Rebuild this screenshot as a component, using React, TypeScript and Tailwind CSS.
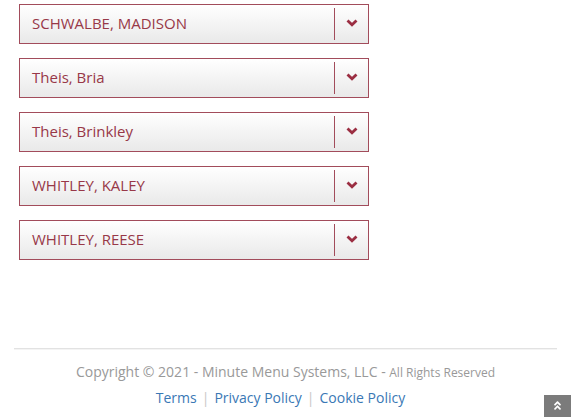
import React from "react";
import { FaAngleDoubleUp } from "react-icons/fa";

const names = [
  "SCHWALBE, MADISON",
  "Theis, Bria",
  "Theis, Brinkley",
  "WHITLEY, KALEY",
  "WHITLEY, REESE",
];

function Chevron() {
  return (
    <svg width="12" height="8" viewBox="0 0 12 8" fill="none">
      <polyline points="1.5,1.5 6,5.8 10.5,1.5" stroke="#9b2e42" strokeWidth="2.8" strokeLinecap="butt" strokeLinejoin="miter" />
    </svg>
  );
}

export default function App() {
  return (
    <div
      className="relative w-[571px] h-[417px] overflow-hidden bg-white"
      style={{ fontFamily: '"Open Sans", "Liberation Sans", sans-serif' }}
    >
      <div className="flex flex-col gap-[14px] pl-[19px] pt-[4px]">
        {names.map((n) => (
          <div
            key={n}
            className="flex h-[40px] w-[350px] items-center border border-[#a24c5b] bg-linear-to-b from-white to-[#e9e9e9]"
          >
            <div className="flex-1 pb-[2px] pl-[12px] text-[15px] leading-none text-[#983848]">{n}</div>
            <div className="h-[32px] w-px bg-[#a24c5b]" />
            <div className="flex w-[33px] items-center justify-center pb-[2px]">
              <Chevron />
            </div>
          </div>
        ))}
      </div>
      <div className="mx-[14px] mt-[88px] h-[2px] border-t border-b border-t-[#e2e2e2] border-b-[#f4f4f4]" />
      <div className="mt-[12px] flex items-baseline justify-center text-[14px] leading-[20px] text-[#999999]">
        <span>Copyright © 2021 - Minute Menu Systems, LLC -&nbsp;</span>
        <span className="text-[12px]">All Rights Reserved</span>
      </div>
      <div className="mt-[5px] flex items-center justify-center pr-[10px] text-[14px] leading-[20px]">
        <span className="text-[#3a78b5]">Terms</span>
        <span className="mx-[5px] text-[#c8c8c8]">|</span>
        <span className="text-[#3a78b5]">Privacy Policy</span>
        <span className="mx-[5px] text-[#c8c8c8]">|</span>
        <span className="text-[#3a78b5]">Cookie Policy</span>
      </div>
      <div className="absolute right-0 top-[395px] flex h-[30px] w-[27px] items-start justify-center bg-[#7b7b7b] pt-[5px] text-white">
        <FaAngleDoubleUp size={11} />
      </div>
    </div>
  );
}
